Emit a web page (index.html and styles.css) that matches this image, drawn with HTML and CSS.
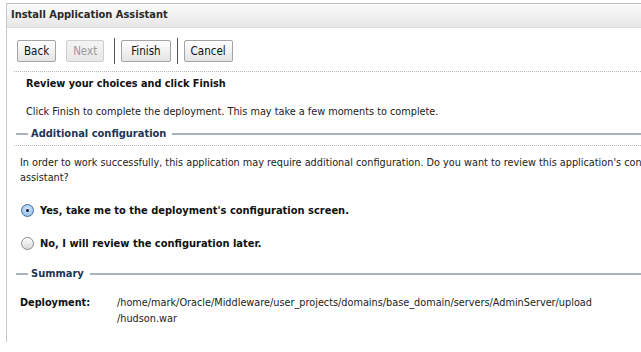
FILE: index.html
```html
<!DOCTYPE html>
<html lang="en">
<head>
    <meta charset="UTF-8">
    <title>Install Application Assistant</title>
    <link rel="stylesheet" href="styles.css">
</head>
<body>
    <div class="panel">
        <div class="panel-header">Install Application Assistant</div>
        <div class="toolbar">
            <button class="btn">Back</button>
            <button class="btn disabled">Next</button>
            <span class="sep"></span>
            <button class="btn wide">Finish</button>
            <span class="sep"></span>
            <button class="btn">Cancel</button>
        </div>
        <div class="content">
            <h2 class="title">Review your choices and click Finish</h2>
            <p class="intro">Click Finish to complete the deployment. This may take a few moments to complete.</p>

            <div class="legend"><span class="dash"></span><span class="legend-text">Additional configuration</span><span class="rule"></span></div>
            <p class="desc">In order to work successfully, this application may require additional configuration. Do you want to review this application's configuration assistant?</p>

            <div class="radio-row">
                <span class="radio checked"></span>
                <span class="radio-label">Yes, take me to the deployment's configuration screen.</span>
            </div>
            <div class="radio-row">
                <span class="radio"></span>
                <span class="radio-label">No, I will review the configuration later.</span>
            </div>

            <div class="legend summary"><span class="dash"></span><span class="legend-text">Summary</span><span class="rule"></span></div>
            <div class="summary-row">
                <div class="summary-label">Deployment:</div>
                <div class="summary-value">/home/mark/Oracle/Middleware/user_projects/domains/base_domain/servers/AdminServer/upload<br>/hudson.war</div>
            </div>
        </div>
    </div>
</body>
</html>
```

FILE: styles.css
```css
body {
    margin: 0;
    padding: 3px 0 0 6px;
    background: #fff;
    font-family: "DejaVu Sans Condensed", "DejaVu Sans", sans-serif;
    font-size: 10.8px;
    color: #222;
    overflow: hidden;
}
.panel {
    width: 760px;
    height: 338px;
    border-left: 1px solid #c8c8c8;
    border-top: 1px solid #bdbdbd;
}
.panel-header {
    height: 23px;
    line-height: 22px;
    padding-left: 4px;
    font-weight: bold;
    font-size: 11px;
    color: #2a2a2a;
    background: linear-gradient(#fbfbfb, #e6e7e6);
    border-bottom: 1px solid #dcdcdc;
}
.toolbar {
    display: flex;
    align-items: center;
    gap: 10px;
    margin-left: 7px;
    padding: 10px 0 7px 3px;
    border-bottom: 1px dotted #b5b5b5;
}
.btn {
    height: 22px;
    padding: 0 6px;
    font-family: inherit;
    font-size: 11.5px;
    color: #111;
    background: linear-gradient(#ffffff, #e4e4e4);
    border: 1px solid #a4a4a4;
    border-radius: 2px;
}
.btn.wide {
    padding: 0 9px;
}
.btn.disabled {
    color: #9a9a9a;
    border-color: #cfcfcf;
    background: linear-gradient(#f4f4f4, #e8e8e8);
}
.sep {
    width: 1px;
    height: 26px;
    background: #555;
    margin: 0 -4px 0 0;
}
.sep + .btn + .sep {
    margin-left: -4px;
}
.content {
    padding: 0 0 0 7px;
}
.title {
    margin: 5px 0 0 12px;
    font-size: 10.8px;
    font-weight: bold;
    color: #111;
}
.intro {
    margin: 15px 0 0 12px;
}
.legend {
    display: flex;
    align-items: center;
    margin-top: 9px;
    padding-bottom: 5px;
    border-bottom: 1px dotted #c0c0c0;
}
.legend.summary {
    border-bottom: none;
    margin-top: 17px;
}
.dash, .rule {
    height: 2px;
    background: #a6b3c1;
}
.dash {
    width: 12px;
    margin-left: 2px;
}
.rule {
    flex: 1;
}
.legend-text {
    padding: 0 6px 0 3px;
    font-weight: bold;
    font-size: 11px;
    color: #1c3557;
}
.desc {
    margin: 9px 0 0 6px;
    line-height: 15px;
    width: 700px;
}
.radio-row {
    display: flex;
    align-items: center;
    margin: 19px 0 0 7px;
    font-weight: bold;
    font-size: 11px;
    color: #111;
}
.radio-row + .radio-row {
    margin-top: 20px;
}
.radio {
    width: 11px;
    height: 11px;
    border: 1px solid #8a8a8a;
    border-radius: 50%;
    background: linear-gradient(#fdfdfd, #d9d9d9);
    margin-right: 6px;
    position: relative;
}
.radio.checked {
    border-color: #4a6f9c;
    background: radial-gradient(circle at 50% 40%, #d7ecff, #7fb2e5);
}
.radio.checked::after {
    content: "";
    position: absolute;
    left: 4px;
    top: 4px;
    width: 3px;
    height: 3px;
    border-radius: 50%;
    background: #0d1c33;
}
.summary-row {
    display: flex;
    margin: 10px 0 0 6px;
    line-height: 16px;
}
.summary-label {
    width: 97px;
    font-weight: bold;
    color: #111;
}
```
